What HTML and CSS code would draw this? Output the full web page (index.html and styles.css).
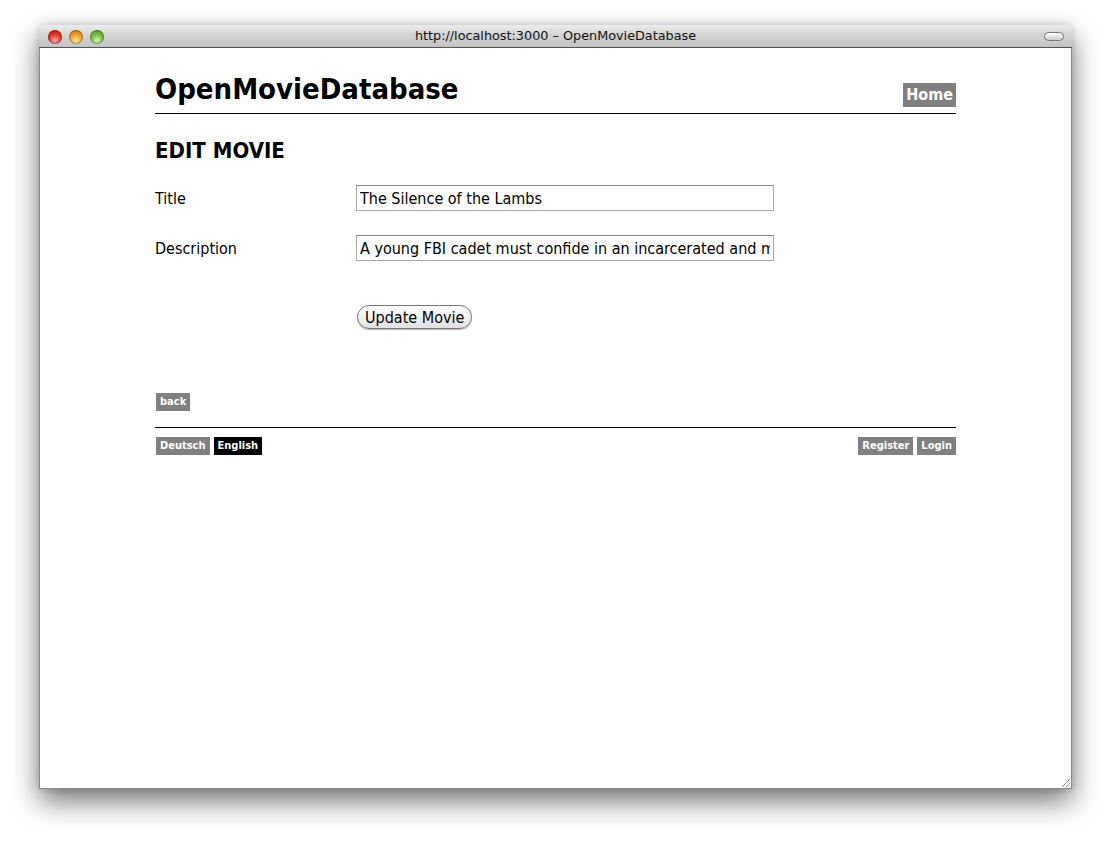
FILE: index.html
```html
<!DOCTYPE html>
<html>
<head>
<meta charset="utf-8">
<title>OpenMovieDatabase</title>
<link rel="stylesheet" href="styles.css">
</head>
<body>
<div class="window">
  <div class="titlebar">
    <div class="lights">
      <span class="light red"></span>
      <span class="light yellow"></span>
      <span class="light green"></span>
    </div>
    <div class="wtitle">http://localhost:3000 – OpenMovieDatabase</div>
    <span class="pill"></span>
  </div>
  <div class="content">
    <div class="page">
      <header class="header">
        <h1 class="logo">OpenMovieDatabase</h1>
        <a class="btn btn-home">Home</a>
      </header>
      <h2 class="heading">EDIT MOVIE</h2>
      <form class="form">
        <label class="label">Title</label>
        <input class="field" type="text" value="The Silence of the Lambs">
        <label class="label">Description</label>
        <input class="field" type="text" value="A young FBI cadet must confide in an incarcerated and manipulative killer">
        <span></span>
        <div class="actions"><button type="button" class="submit">Update Movie</button></div>
      </form>
      <div class="backrow"><a class="btn btn-small">back</a></div>
      <footer class="footer">
        <div class="group">
          <a class="btn btn-small">Deutsch</a>
          <a class="btn btn-small active">English</a>
        </div>
        <div class="group">
          <a class="btn btn-small">Register</a>
          <a class="btn btn-small">Login</a>
        </div>
      </footer>
    </div>
    <div class="grip"></div>
  </div>
</div>
</body>
</html>
```
FILE: styles.css
```css
html, body {
  margin: 0;
  padding: 0;
  background: #fff;
}
body {
  min-height: 843px;
  box-sizing: border-box;
  padding: 25px 0 0 39px;
  font-family: "DejaVu Sans", sans-serif;
  font-stretch: condensed;
}
.window {
  width: 1033px;
  height: 764px;
  display: flex;
  flex-direction: column;
  box-shadow: 0 12px 28px rgba(0,0,0,0.55), 0 0 6px rgba(0,0,0,0.15);
  border-radius: 5px 5px 0 0;
}
.titlebar {
  height: 22px;
  flex: none;
  display: flex;
  align-items: center;
  position: relative;
  background: linear-gradient(#ececec, #d6d6d6 40%, #c3c3c3);
  border-bottom: 1px solid #555;
  border-radius: 5px 5px 0 0;
  padding: 0 8px 0 9px;
}
.lights {
  display: flex;
  gap: 7px;
  padding-top: 1px;
}
.light {
  width: 14px;
  height: 14px;
  border-radius: 50%;
  box-shadow: inset 0 0 0 1px rgba(0,0,0,0.25);
}
.red { background: radial-gradient(circle at 50% 75%, #ffb0a8, #e83a30 45%, #a81810); }
.yellow { background: radial-gradient(circle at 50% 75%, #ffe6a0, #f2a030 45%, #b86a10); }
.green { background: radial-gradient(circle at 50% 75%, #d8f4a8, #7cc04a 45%, #3e8a20); }
.wtitle {
  position: absolute;
  left: 0;
  right: 0;
  top: 3px;
  text-align: center;
  font-family: "DejaVu Sans", sans-serif;
  font-stretch: normal;
  font-size: 12.8px;
  color: #111;
  pointer-events: none;
}
.pill {
  margin-left: auto;
  width: 18px;
  height: 7px;
  border: 1px solid #777;
  border-radius: 5px;
  background: linear-gradient(#fff, #ccc);
}
.content {
  flex: 1;
  background: #fff;
  border: 1px solid #8a8a8a;
  border-top: none;
  position: relative;
}
.grip {
  position: absolute;
  right: 1px;
  bottom: 1px;
  width: 10px;
  height: 10px;
  background: repeating-linear-gradient(135deg, transparent 0 2px, #888 2px 3px);
  clip-path: polygon(100% 0, 100% 100%, 0 100%);
}
.page {
  width: 801px;
  margin: 0 auto;
  padding-top: 23px;
}
.header {
  display: flex;
  justify-content: space-between;
  align-items: flex-end;
  border-bottom: 1px solid #000;
  padding-bottom: 6px;
}
.logo {
  margin: 0;
  font-size: 29px;
  line-height: 36px;
  font-weight: bold;
  color: #000;
}
.btn {
  display: inline-block;
  background: #808080;
  color: #fff;
  font-weight: bold;
}
.btn-home {
  font-size: 16px;
  line-height: 24px;
  padding: 0 3px;
}
.heading {
  margin: 24px 0 0;
  font-size: 22px;
  line-height: 26px;
  font-weight: bold;
}
.form {
  display: grid;
  grid-template-columns: 201px 418px;
  row-gap: 24px;
  align-items: center;
  margin-top: 21px;
}
.label {
  font-size: 16px;
}
.field {
  box-sizing: border-box;
  width: 418px;
  height: 26px;
  margin: 0;
  padding: 0 3px;
  border: 1px solid #aaa;
  border-top-color: #888;
  font-family: "DejaVu Sans", sans-serif;
  font-stretch: condensed;
  font-size: 16px;
  color: #000;
}
.actions {
  padding-top: 20px;
}
.submit {
  margin-left: 1px;
  height: 24px;
  padding: 0 7px;
  border: 1px solid #777;
  border-radius: 12px;
  background: linear-gradient(#fff, #f2f2f2 50%, #e0e0e0);
  box-shadow: 0 1px 1px rgba(0,0,0,0.3);
  font-family: "DejaVu Sans", sans-serif;
  font-stretch: condensed;
  font-size: 16px;
  color: #000;
}
.backrow {
  margin-top: 64px;
  padding-left: 1px;
  padding-bottom: 16px;
  border-bottom: 1px solid #000;
  display: flex;
}
.btn-small {
  font-size: 11px;
  line-height: 18px;
  padding: 0 4px;
}
.footer {
  display: flex;
  justify-content: space-between;
  margin-top: 9px;
  padding-left: 1px;
}
.group {
  display: flex;
  gap: 4px;
}
.active {
  background: #000;
}
```
